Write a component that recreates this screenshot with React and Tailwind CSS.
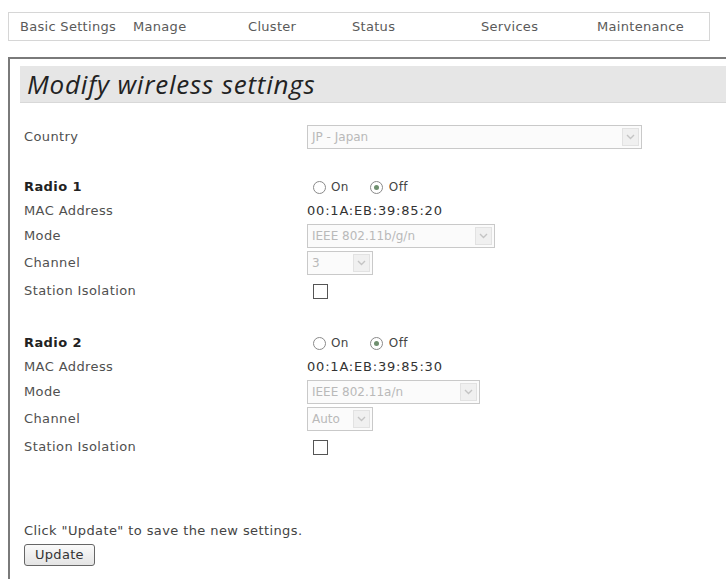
import React from "react";

const NAV = [
  { label: "Basic Settings", w: "w-[113px]" },
  { label: "Manage", w: "w-[115px]" },
  { label: "Cluster", w: "w-[104px]" },
  { label: "Status", w: "w-[129px]" },
  { label: "Services", w: "w-[116px]" },
  { label: "Maintenance", w: "w-[100px]" },
];

const Select = ({ value, w }) => (
  <div className={`flex items-center justify-between h-[24px] border border-[#c9c9c9] bg-[#fbfbfb] ${w}`}>
    <span className="pl-[4px] text-[12px] text-[#b9b9b9]">{value}</span>
    <span className="mr-[2px] flex h-[18px] w-[17px] items-center justify-center border border-[#e2e2e2] bg-[#f0f0f0]">
      <svg width="9" height="6" viewBox="0 0 9 6">
        <path d="M1 1l3.5 3.5L8 1" fill="none" stroke="#c4c4c4" strokeWidth="1.4" />
      </svg>
    </span>
  </div>
);

const Radio = ({ checked }) => (
  <span className="flex h-[13px] w-[13px] items-center justify-center rounded-full border border-[#8a8a8a] bg-white">
    {checked && <span className="h-[5px] w-[5px] rounded-full bg-[#6f8f6f]" />}
  </span>
);

const Row = ({ label, bold, h, mt, children }) => (
  <div className={`flex items-center ${h} ${mt}`}>
    <div className={`w-[283px] text-[13px] tracking-[0.4px] ${bold ? "font-bold text-[#222]" : "text-[#505050]"}`}>
      {label}
    </div>
    <div className="flex items-center">{children}</div>
  </div>
);

const RadioBlock = ({ name, mac, mode, modeW, channel, first }) => (
  <div className={first ? "mt-[27px]" : "mt-[29px]"}>
    <Row label={name} bold h="h-[22px]">
      <div className="ml-[6px] flex items-center text-[12px] tracking-[0.4px] text-[#444]">
        <Radio />
        <span className="ml-[5px] mr-[21px]">On</span>
        <Radio checked />
        <span className="ml-[6px]">Off</span>
      </div>
    </Row>
    <Row label="MAC Address" h="h-[22px]" mt="mt-[2px]">
      <span className="text-[13px] tracking-[0.8px] text-[#333]">{mac}</span>
    </Row>
    <Row label="Mode" h="h-[25px]" mt="mt-[1px]">
      <Select value={mode} w={modeW} />
    </Row>
    <Row label="Channel" h="h-[26px]" mt="mt-[2px]">
      <Select value={channel} w="w-[66px]" />
    </Row>
    <Row label="Station Isolation" h="h-[24px]" mt="mt-[3px]">
      <span className="ml-[6px] block h-[15px] w-[15px] border border-[#555] bg-white" />
    </Row>
  </div>
);

export default function App() {
  return (
    <div className="min-h-screen bg-white pt-[12px] font-['DejaVu_Sans',sans-serif] text-[#444]">
      <div className="ml-[8px] flex h-[29px] w-[702px] items-center border border-[#d6d6d6] pl-[11px] text-[13px] tracking-[0.3px] text-[#5a5a5a]">
        {NAV.map((n) => (
          <span key={n.label} className={n.w}>
            {n.label}
          </span>
        ))}
      </div>

      <div className="ml-[8px] mt-[16px] border-l-2 border-t-2 border-[#7a7a7a] pb-[14px]">
        <div className="ml-[10px] mt-[7px] flex h-[37px] items-center border-b border-[#d8d8d8] bg-[#e6e6e6] pl-[7px]">
          <h1 className="font-['Open_Sans',sans-serif] text-[26px] italic tracking-[0.8px] text-[#222]">
            Modify wireless settings
          </h1>
        </div>

        <div className="pl-[14px]">
          <Row label="Country" h="h-[24px]" mt="mt-[22px]">
            <Select value="JP - Japan" w="w-[335px]" />
          </Row>

          <RadioBlock
            first
            name="Radio 1"
            mac="00:1A:EB:39:85:20"
            mode="IEEE 802.11b/g/n"
            modeW="w-[188px]"
            channel="3"
          />
          <RadioBlock
            name="Radio 2"
            mac="00:1A:EB:39:85:30"
            mode="IEEE 802.11a/n"
            modeW="w-[173px]"
            channel="Auto"
          />

          <p className="mt-[62px] text-[13px] tracking-[0.4px] text-[#444]">
            Click "Update" to save the new settings.
          </p>
          <button className="mt-[3px] h-[22px] rounded-[3px] border border-[#666] bg-gradient-to-b from-[#fafafa] to-[#e4e4e4] px-[10px] text-[13px] tracking-[0.3px] text-[#333]">
            Update
          </button>
        </div>
      </div>
    </div>
  );
}
